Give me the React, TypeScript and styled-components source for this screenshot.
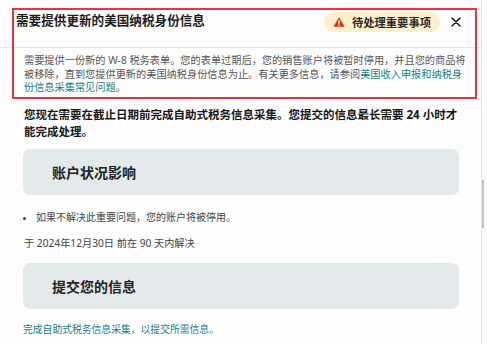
import styled, { createGlobalStyle } from 'styled-components';

const GlobalStyle = createGlobalStyle`
  html, body {
    margin: 0;
    padding: 0;
    background: #fdfdfd;
  }
  body {
    font-family: "Noto Sans", "Noto Sans CJK SC", sans-serif;
    color: #222;
  }
`;

const Page = styled.div`
  display: flex;
  width: 487px;
  height: 344px;
  overflow: hidden;
`;

const Main = styled.div`
  position: relative;
  width: 482px;
  display: flex;
  flex-direction: column;
`;

const Highlight = styled.div`
  position: absolute;
  left: 12px;
  top: 8px;
  width: 465px;
  height: 91px;
  box-sizing: border-box;
  border: 2px solid #e8343a;
  pointer-events: none;
`;

const Header = styled.div`
  display: flex;
  align-items: flex-start;
  height: 48px;
  box-sizing: border-box;
  padding: 12px 0 0 16px;
  border-bottom: 1px solid #e6e6e6;
`;

const Title = styled.div`
  flex: 1;
  font-size: 12.6px;
  font-weight: 700;
  line-height: 18px;
  color: #1b1b1b;
`;

const Badge = styled.div`
  display: flex;
  align-items: center;
  gap: 7px;
  height: 20px;
  padding: 0 9px 0 9px;
  border-radius: 10px;
  background: #fcf0cc;
  font-size: 11.3px;
  font-weight: 700;
  color: #2a2a2a;
`;

const Close = styled.button`
  display: flex;
  align-items: center;
  justify-content: center;
  width: 20px;
  height: 20px;
  margin: 0 15px 0 6px;
  padding: 0;
  border: none;
  background: transparent;
`;

const Notice = styled.p`
  margin: 0;
  padding: 6px 0 0 24px;
  max-width: 446px;
  font-size: 10.2px;
  line-height: 13.6px;
  color: #555;
`;

const Link = styled.a`
  color: #15807f;
  text-decoration: none;
`;

const Content = styled.div`
  display: flex;
  flex-direction: column;
  padding: 11px 22px 0 23px;
`;

const Lead = styled.p`
  margin: 0 0 9px 1px;
  max-width: 445px;
  font-size: 11.5px;
  font-weight: 700;
  line-height: 17px;
  color: #161616;
`;

const Card = styled.div`
  display: flex;
  align-items: center;
  height: 46px;
  padding-left: 29px;
  border-radius: 7px;
  background: #e3e9ea;
  font-size: 14px;
  font-weight: 700;
  color: #232323;
`;

const Bullets = styled.ul`
  margin: 15px 0 0 0;
  padding: 0 0 0 13px;
  font-size: 10px;
  line-height: 14px;
  color: #444;
  li::marker {
    font-size: 9px;
  }
`;

const Deadline = styled.div`
  margin: 12px 0 13px 1px;
  font-size: 10.2px;
  line-height: 14px;
  color: #444;
`;

const Action = styled(Link)`
  display: block;
  margin-top: 14px;
  font-size: 9.8px;
  line-height: 14px;
`;

const Scrollbar = styled.div`
  display: flex;
  flex-direction: column;
  width: 5px;
  border-left: 1px solid #e4e4e4;
`;

const Thumb = styled.div`
  width: 2px;
  height: 48px;
  margin-top: 180px;
  background: #c4c4c4;
`;

const WarningIcon = () => (
  <svg width="12" height="10" viewBox="0 0 12 10">
    <path d="M6 0.3 L11.7 9.7 H0.3 Z" fill="#d6361f" />
    <rect x="5.35" y="3.3" width="1.3" height="3.6" fill="#fff" />
    <rect x="5.35" y="7.6" width="1.3" height="1.2" fill="#fff" />
  </svg>
);

const CloseIcon = () => (
  <svg width="10" height="10" viewBox="0 0 10 10">
    <path d="M1 1 L9 9 M9 1 L1 9" stroke="#222" strokeWidth="1.6" strokeLinecap="round" />
  </svg>
);

export default function App() {
  return (
    <Page>
      <GlobalStyle />
      <Main>
        <Header>
          <Title>需要提供更新的美国纳税身份信息</Title>
          <Badge>
            <WarningIcon />
            待处理重要事项
          </Badge>
          <Close aria-label="关闭">
            <CloseIcon />
          </Close>
        </Header>
        <Notice>
          需要提供一份新的 W-8 税务表单。您的表单过期后，您的销售账户将被暂时停用，并且您的商品将<br />
          被移除，直到您提供更新的美国纳税身份信息为止。有关更多信息，请参阅<Link href="#">美国收入申报和纳税身<br />份信息采集常见问题</Link>。
        </Notice>
        <Content>
          <Lead>
            您现在需要在截止日期前完成自助式税务信息采集。您提交的信息最长需要 24 小时才<br />
            能完成处理。
          </Lead>
          <Card>账户状况影响</Card>
          <Bullets>
            <li>如果不解决此重要问题，您的账户将被停用。</li>
          </Bullets>
          <Deadline>于 2024年12月30日 前在 90 天内解决</Deadline>
          <Card>提交您的信息</Card>
          <Action href="#">完成自助式税务信息采集，以提交所需信息。</Action>
        </Content>
        <Highlight />
      </Main>
      <Scrollbar>
        <Thumb />
      </Scrollbar>
    </Page>
  );
}
